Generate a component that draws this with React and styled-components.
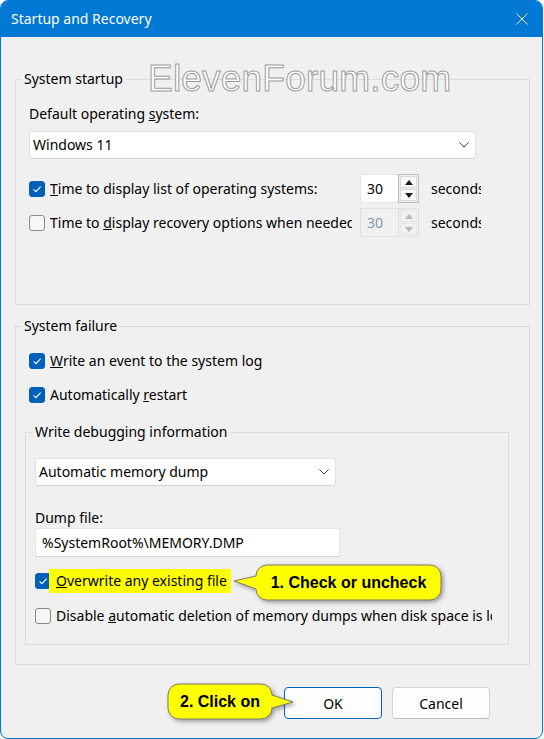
import React from 'react';
import styled, { createGlobalStyle } from 'styled-components';

const GlobalStyle = createGlobalStyle`
  html, body {
    margin: 0;
    padding: 0;
    background: #ffffff;
  }
  body {
    font-family: "Noto Sans", "Segoe UI", sans-serif;
    font-size: 14px;
    color: #000;
  }
  * {
    box-sizing: border-box;
  }
`;

const Window = styled.div`
  position: relative;
  width: 543px;
  height: 739px;
  background: #f0f0f0;
  border: 1px solid #0078d4;
  border-radius: 8px;
  overflow: hidden;
  display: flex;
  flex-direction: column;
`;

const TitleBar = styled.div`
  height: 36px;
  flex-shrink: 0;
  background: #0078d4;
  color: #fff;
  display: flex;
  align-items: center;
  justify-content: space-between;
  padding: 0 14px 0 10px;
`;

const Title = styled.span`
  font-size: 14px;
  line-height: 20px;
`;

const Body = styled.div`
  padding: 0 12px 0 14px;
`;

const Group = styled.fieldset`
  margin: ${({ $top }) => $top}px 0 0 0;
  padding: ${({ $pad }) => $pad};
  border: 1px solid #dcdcdc;
  min-inline-size: 0;
  width: ${({ $width }) => ($width ? `${$width}px` : 'auto')};
  margin-left: ${({ $shift }) => $shift || 0}px;
`;

const Legend = styled.legend`
  padding: 0 2px;
  margin-left: ${({ $shift }) => $shift}px;
  line-height: 20px;
  font-size: 14px;
`;

const FieldLabel = styled.div`
  line-height: 20px;
  margin-top: ${({ $top }) => $top || 0}px;
  white-space: nowrap;
`;

const Select = styled.div`
  margin-top: ${({ $top }) => $top || 0}px;
  width: ${({ $width }) => $width}px;
  height: 28px;
  background: #fff;
  border: 1px solid #e1e1e1;
  border-bottom-color: #d2d2d2;
  border-radius: 3px;
  display: flex;
  align-items: center;
  justify-content: space-between;
  padding: 0 6px 0 3px;
  line-height: 20px;
`;

const TextInput = styled.div`
  width: 305px;
  height: 29px;
  background: #fff;
  border: 1px solid #e6e6e6;
  border-bottom-color: #d6d6d6;
  padding: 0 6px;
  line-height: 27px;
  white-space: nowrap;
`;

const Row = styled.div`
  display: flex;
  align-items: center;
  gap: 5px;
  height: ${({ $h }) => $h || 20}px;
  margin-top: ${({ $top }) => $top || 0}px;
`;

const Box = styled.span`
  width: 16px;
  height: 16px;
  flex-shrink: 0;
  border-radius: 3px;
  display: flex;
  align-items: center;
  justify-content: center;
  background: ${({ $checked }) => ($checked ? '#005fb8' : '#f6f6f6')};
  border: 1px solid ${({ $checked }) => ($checked ? '#005fb8' : '#8a8a8a')};
`;

const Label = styled.span`
  line-height: 20px;
  white-space: nowrap;
  overflow: hidden;
  width: ${({ $width }) => ($width ? `${$width}px` : 'auto')};
  margin-right: ${({ $after }) => $after || 0}px;
  flex-shrink: 0;
`;

const Highlight = styled.span`
  background: #ffff00;
  margin-left: -7px;
  padding: 0 4px 0 7px;
  line-height: 24px;
  white-space: nowrap;
`;

const Spin = styled.div`
  display: flex;
  width: 59px;
  height: 29px;
  flex-shrink: 0;
`;

const SpinValue = styled.div`
  flex: 1;
  background: ${({ $disabled }) => ($disabled ? '#f0f0f0' : '#fff')};
  border: 1px solid ${({ $disabled }) => ($disabled ? '#dedede' : '#e6e6e6')};
  border-right: none;
  color: ${({ $disabled }) => ($disabled ? '#7f98ad' : '#000')};
  padding-left: 6px;
  line-height: 27px;
`;

const SpinButtons = styled.div`
  width: 21px;
  display: flex;
  flex-direction: column;
  gap: 1px;
  padding: 1px;
  border: 1px solid ${({ $disabled }) => ($disabled ? '#dedede' : '#bcbcbc')};
  background: #f0f0f0;
`;

const SpinBtn = styled.div`
  flex: 1;
  display: flex;
  align-items: center;
  justify-content: center;
  background: ${({ $disabled }) => ($disabled ? '#f0f0f0' : '#fafafa')};
  border: 1px solid ${({ $disabled }) => ($disabled ? '#e6e6e6' : '#dadada')};
`;

const Unit = styled.span`
  margin-left: 7px;
  width: 50px;
  overflow: hidden;
  white-space: nowrap;
  line-height: 20px;
`;

const Footer = styled.div`
  display: flex;
  justify-content: flex-end;
  gap: 10px;
  margin-top: 22px;
  padding-right: 40px;
`;

const Button = styled.button`
  width: 98px;
  height: 32px;
  font-family: "Noto Sans", "Segoe UI", sans-serif;
  font-size: 14px;
  color: #000;
  background: #fdfdfd;
  border: 1px solid ${({ $primary }) => ($primary ? '#0067c0' : '#d4d4d4')};
  border-bottom-color: ${({ $primary }) => ($primary ? '#0067c0' : '#bdbdbd')};
  border-radius: 4px;
  padding: 0;
`;

const Watermark = styled.div`
  position: absolute;
  left: 147px;
  top: 59px;
  font-family: "Liberation Sans", Arial, sans-serif;
  font-size: 37px;
  line-height: 1;
  color: #ffffff;
  -webkit-text-stroke: 1px #9c9c9c;
  letter-spacing: 0.2px;
  pointer-events: none;
`;

const Callout = styled.div`
  position: absolute;
  left: ${({ $x }) => $x}px;
  top: ${({ $y }) => $y}px;
  width: ${({ $w }) => $w}px;
  height: ${({ $h }) => $h}px;
`;

const CalloutShape = styled.svg`
  position: absolute;
  inset: 0;
  overflow: visible;
  filter: drop-shadow(2px 2px 2px rgba(0, 0, 0, 0.35));
`;

const CalloutText = styled.div`
  position: relative;
  margin-left: ${({ $bx }) => $bx}px;
  margin-top: ${({ $by }) => $by}px;
  width: ${({ $bw }) => $bw}px;
  height: ${({ $bh }) => $bh}px;
  display: flex;
  align-items: center;
  justify-content: center;
  font-family: "Liberation Sans", Arial, sans-serif;
  font-weight: bold;
  font-size: 16px;
  color: #000;
  white-space: nowrap;
`;

const Check = () => (
  <svg width="12" height="12" viewBox="0 0 12 12">
    <path d="M2.6 6.3 L5 8.6 L9.6 3.6" fill="none" stroke="#fff" strokeWidth="1.1" />
  </svg>
);

const CheckBox = ({ checked }) => <Box $checked={checked}>{checked && <Check />}</Box>;

const Chevron = () => (
  <svg width="10" height="6" viewBox="0 0 10 6">
    <polyline points="0.5,0.5 5,5 9.5,0.5" fill="none" stroke="#404040" strokeWidth="1" />
  </svg>
);

const Arrow = ({ up, color }) => (
  <svg width="8" height="5" viewBox="0 0 8 5">
    <polygon points={up ? '0,5 8,5 4,0' : '0,0 8,0 4,5'} fill={color} />
  </svg>
);

const Spinner = ({ disabled }) => {
  const c = disabled ? '#b8b8b8' : '#1c1c10';
  return (
    <Spin>
      <SpinValue $disabled={disabled}>30</SpinValue>
      <SpinButtons $disabled={disabled}>
        <SpinBtn $disabled={disabled}><Arrow up color={c} /></SpinBtn>
        <SpinBtn $disabled={disabled}><Arrow color={c} /></SpinBtn>
      </SpinButtons>
    </Spin>
  );
};

const CloseIcon = () => (
  <svg width="12" height="12" viewBox="0 0 12 12">
    <path d="M0.5 0.5 L11.5 11.5 M11.5 0.5 L0.5 11.5" stroke="#fff" strokeWidth="1" />
  </svg>
);

const App = () => (
  <>
    <GlobalStyle />
    <Window>
      <TitleBar>
        <Title>Startup and Recovery</Title>
        <CloseIcon />
      </TitleBar>
      <Body>
        <Group $top={32} $pad="15px 13px 67px">
          <Legend $shift={-7}>System startup</Legend>
          <FieldLabel>Default operating <u>s</u>ystem:</FieldLabel>
          <Select $top={7} $width={447}>
            <span>Windows 11</span>
            <Chevron />
          </Select>
          <Row $h={29} $top={15}>
            <CheckBox checked />
            <Label $width={305}><u>T</u>ime to display list of operating systems:</Label>
            <Spinner />
            <Unit>seconds</Unit>
          </Row>
          <Row $h={29} $top={5}>
            <CheckBox />
            <Label $width={302} $after={3}>Time to <u>d</u>isplay recovery options when needed:</Label>
            <Spinner disabled />
            <Unit>seconds</Unit>
          </Row>
        </Group>

        <Group $top={11} $pad="15px 13px 19px">
          <Legend $shift={-7}>System failure</Legend>
          <Row>
            <CheckBox checked />
            <Label><u>W</u>rite an event to the system log</Label>
          </Row>
          <Row $top={14}>
            <CheckBox checked />
            <Label>Automatically <u>r</u>estart</Label>
          </Row>
          <Group $top={17} $shift={-4} $width={484} $pad="16px 9px 16px">
            <Legend $shift={-2}>Write debugging information</Legend>
            <Select $width={301}>
              <span>Automatic memory dump</span>
              <Chevron />
            </Select>
            <FieldLabel $top={22}>Dump file:</FieldLabel>
            <TextInput>%SystemRoot%\MEMORY.DMP</TextInput>
            <Row $h={24} $top={12}>
              <CheckBox checked />
              <Highlight><u>O</u>verwrite any existing file</Highlight>
            </Row>
            <Row $h={24} $top={11}>
              <CheckBox />
              <Label $width={436}>Disable <u>a</u>utomatic deletion of memory dumps when disk space is low</Label>
            </Row>
          </Group>
        </Group>

        <Footer>
          <Button $primary>OK</Button>
          <Button>Cancel</Button>
        </Footer>
      </Body>

      <Watermark>ElevenForum.com</Watermark>

      <Callout $x={230} $y={561} $w={214} $h={42}>
        <CalloutShape width="214" height="42" viewBox="231 562 214 42">
          <path
            d="M267 565 H430 A11 11 0 0 1 441 576 V589 A11 11 0 0 1 430 600 H267 A11 11 0 0 1 256 589 L234 581 L256 576 A11 11 0 0 1 267 565 Z"
            fill="#ffff00"
            stroke="#7a7a6a"
            strokeWidth="1"
          />
        </CalloutShape>
        <CalloutText $bx={25} $by={3} $bw={185} $bh={35}>1. Check or uncheck</CalloutText>
      </Callout>

      <Callout $x={164} $y={680} $w={131} $h={41}>
        <CalloutShape width="131" height="41" viewBox="165 681 131 41">
          <path
            d="M179 684 H261 A11 11 0 0 1 272 695 L293 702 L272 708 A11 11 0 0 1 261 719 H179 A11 11 0 0 1 168 708 V695 A11 11 0 0 1 179 684 Z"
            fill="#ffff00"
            stroke="#7a7a6a"
            strokeWidth="1"
          />
        </CalloutShape>
        <CalloutText $bx={3} $by={3} $bw={104} $bh={35}>2. Click on</CalloutText>
      </Callout>
    </Window>
  </>
);

export default App;
